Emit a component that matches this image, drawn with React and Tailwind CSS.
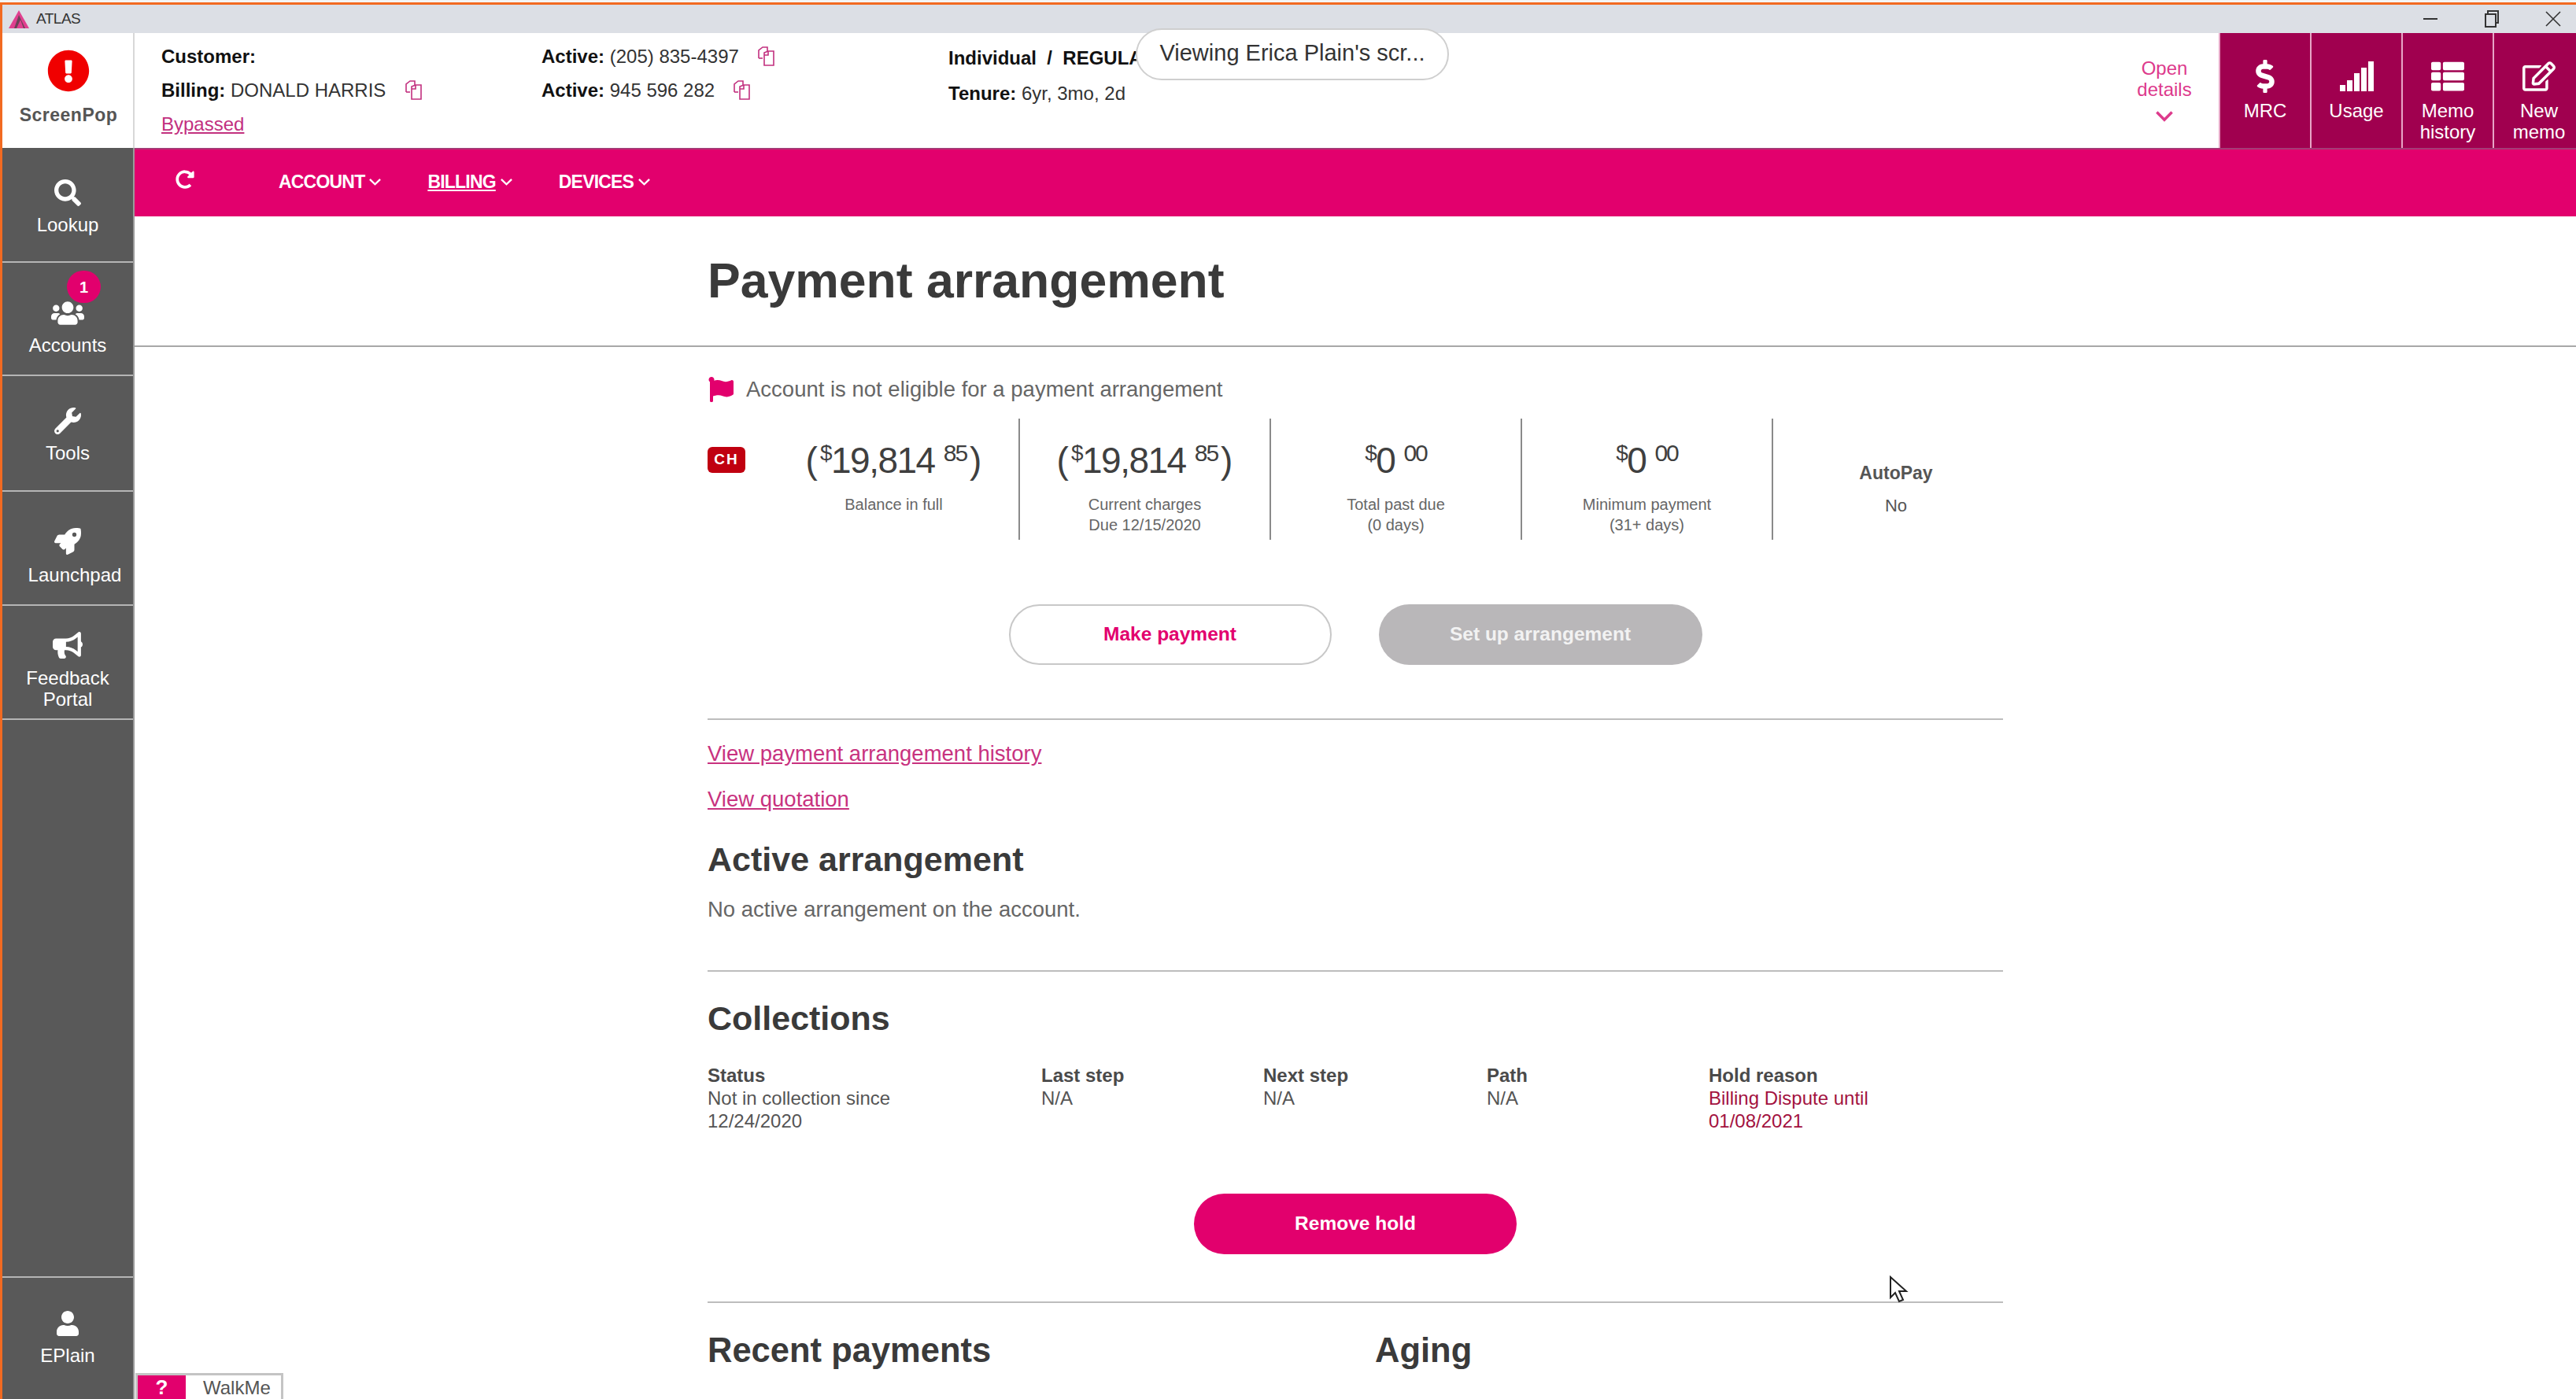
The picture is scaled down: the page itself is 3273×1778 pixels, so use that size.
import { FaSearch, FaUsers, FaWrench, FaRocket, FaBullhorn, FaUser, FaDollarSign, FaThList, FaRegEdit, FaFlag, FaExclamationCircle, FaRedoAlt } from 'react-icons/fa';

const sideItems = [
  { label: ['Lookup'], Icon: FaSearch, box: 'h-[146px] pt-[40px]', gap: 'mt-[10px]', size: 34 },
  { label: ['Accounts'], Icon: FaUsers, box: 'h-[144px] pt-[47px]', gap: 'mt-[10px]', size: 42, badge: '1' },
  { label: ['Tools'], Icon: FaWrench, box: 'h-[147px] pt-[40px]', gap: 'mt-[10px]', size: 34 },
  { label: ['Launchpad'], Icon: FaRocket, box: 'h-[145px] pt-[46px]', gap: 'mt-[12px]', size: 34, shift: 'pl-[18px]' },
  { label: ['Feedback', 'Portal'], Icon: FaBullhorn, box: 'h-[145px] pt-[33px]', gap: 'mt-[11px]', size: 38 },
];

const tiles = [
  { Icon: FaDollarSign, label: ['MRC'] },
  { Icon: null, label: ['Usage'] },
  { Icon: FaThList, label: ['Memo', 'history'] },
  { Icon: FaRegEdit, label: ['New', 'memo'] },
];

const CopyIcon = () => (
  <svg width="24" height="26" viewBox="0 0 24 26" fill="none" stroke="#c2307f" strokeWidth="1.6" className="shrink-0">
    <path d="M3 15V5l5-4h6v5" />
    <path d="M3 15h5" />
    <path d="M10 8l5-2h7v18H10z" fill="white" />
    <path d="M15 6v5h-5" />
  </svg>
);

const SignalIcon = () => (
  <svg width="43" height="38" viewBox="0 0 43 38" fill="white">
    <rect x="0" y="30" width="7" height="8" />
    <rect x="9" y="24" width="7" height="14" />
    <rect x="18" y="15" width="7" height="23" />
    <rect x="27" y="8" width="7" height="30" />
    <rect x="36" y="0" width="7" height="38" />
  </svg>
);

const Chevron = ({ w, h, width = 2.5 }) => (
  <svg width={w} height={h} viewBox="0 0 16 10" fill="none" stroke="currentColor" strokeWidth={width} preserveAspectRatio="none" className="shrink-0">
    <path d="M1 1l7 7 7-7" />
  </svg>
);

const Amount = ({ whole, cents, parens }) => (
  <div className="flex items-start h-[52px] text-[#3f3f3f]">
    {parens && <span className="text-[46px] leading-[52px] mr-[3px]">(</span>}
    <span className="text-[28px] leading-[30px] mt-[2px] tracking-[-1.5px]">$</span>
    <span className="text-[46px] leading-[52px] tracking-[-1.5px]">{whole}</span>
    <span className="text-[30px] leading-[30px] mt-[2px] ml-[11px] tracking-[-2px]">{cents}</span>
    {parens && <span className="text-[46px] leading-[52px] ml-[4px]">)</span>}
  </div>
);

const Stat = ({ whole, cents, parens, lines }) => (
  <div className="w-[319px] h-[154px] shrink-0 border-r-2 border-[#8a8a8a] flex flex-col items-center pt-[27px]">
    <Amount whole={whole} cents={cents} parens={parens} />
    <div className="mt-[17px] text-[20px] leading-[26px] text-[#666] text-center">
      {lines.map(l => <div key={l}>{l}</div>)}
    </div>
  </div>
);

const CollectionCol = ({ title, lines, tone }) => (
  <div className="text-[24px] leading-[29px]">
    <div className="font-bold text-[#4a4a4a]">{title}</div>
    {lines.map(l => <div key={l} className={tone || 'text-[#555]'}>{l}</div>)}
  </div>
);

export default function App() {
  return (
    <div className="relative w-[3273px] h-[1778px] overflow-hidden bg-white font-['Liberation_Sans',Arial,sans-serif]">
      <div className="h-[3px] bg-[#f4f4f4]" />
      <div className="h-[3px] bg-[#f26a21]" />
      <div className="flex flex-col h-[1772px] border-l-[3px] border-[#f26a21]">

        {/* title bar */}
        <div className="h-[36px] shrink-0 bg-[#dcdfe5] flex items-center pl-[8px] pr-[19px]">
          <svg width="26" height="23" viewBox="0 0 26 23" className="shrink-0">
            <path d="M13 0L26 23H0z" fill="#e0408f" />
            <path d="M13 6L7 23h3l5-11 4 11h2z" fill="#444" opacity="0.75" />
          </svg>
          <span className="ml-[9px] text-[19px] text-[#333] tracking-[-0.5px]">ATLAS</span>
          <div className="ml-auto flex items-center gap-[58px] text-[#333]">
            <svg width="20" height="20" viewBox="0 0 20 20" stroke="#333" strokeWidth="2"><path d="M1 10h18" /></svg>
            <svg width="20" height="22" viewBox="0 0 20 22" fill="none" stroke="#333" strokeWidth="2"><path d="M5 4V1h13v15h-3" /><rect x="2" y="5" width="13" height="16" /></svg>
            <svg width="20" height="20" viewBox="0 0 20 20" stroke="#333" strokeWidth="1.6"><path d="M1 1l18 18M19 1L1 19" /></svg>
          </div>
        </div>

        <div className="flex flex-1 min-h-0">
          {/* sidebar */}
          <div className="w-[168px] shrink-0 flex flex-col">
            <div className="h-[146px] shrink-0 bg-white border-r-2 border-[#d8d8d8] flex flex-col items-center pt-[21px] pl-[2px]">
              <FaExclamationCircle className="text-[#f00000] text-[54px]" />
              <div className="mt-[15px] text-[23px] leading-[28px] font-bold text-[#555] tracking-[0.5px]">ScreenPop</div>
            </div>
            <div className="flex-1 bg-[#595959] border-r-2 border-[#9a9a9a] flex flex-col text-white">
              {sideItems.map(({ label, Icon, box, gap, size, badge, shift }) => (
                <div key={label[0]} className={`relative shrink-0 border-b-2 border-[#b5b5b5] flex flex-col items-center ${box}`}>
                  <div className="h-[34px] flex items-center justify-center">
                    <Icon size={size} />
                  </div>
                  <div className={`${gap} text-center text-[24px] leading-[27px] ${shift || ''}`}>
                    {label.map(l => <div key={l}>{l}</div>)}
                  </div>
                  {badge && (
                    <div className="absolute left-[82px] top-[10px] w-[43px] h-[41px] rounded-full bg-[#e2006d] flex items-center justify-center text-[20px] font-bold">
                      {badge}
                    </div>
                  )}
                </div>
              ))}
              <div className="flex-1 border-b-2 border-[#b5b5b5]" />
              <div className="h-[154px] shrink-0 flex flex-col items-center pt-[41px]">
                <div className="h-[34px] flex items-center"><FaUser size={32} /></div>
                <div className="mt-[10px] text-[24px] leading-[27px]">EPlain</div>
              </div>
            </div>
          </div>

          {/* right side */}
          <div className="flex-1 min-w-0 flex flex-col">
            <div className="h-[146px] shrink-0 flex bg-white text-[24px] text-[#333] mr-[-10px]">
              <div className="w-[517px] shrink-0 pl-[34px] pt-[8px] leading-[43px]">
                <div className="font-bold text-[#111]">Customer:</div>
                <div className="flex items-center gap-[23px]"><span><b className="text-[#111]">Billing:</b> DONALD HARRIS</span><CopyIcon /></div>
                <a className="text-[#c2307f] underline">Bypassed</a>
              </div>
              <div className="w-[517px] shrink-0 pt-[8px] leading-[43px]">
                <div className="flex items-center gap-[22px]"><span><b className="text-[#111]">Active:</b> (205) 835-4397</span><CopyIcon /></div>
                <div className="flex items-center gap-[22px]"><span><b className="text-[#111]">Active:</b> 945 596 282</span><CopyIcon /></div>
              </div>
              <div className="pt-[9px] leading-[45px]">
                <div className="font-bold text-[#111]">Individual&nbsp;&nbsp;/&nbsp;&nbsp;REGULAR</div>
                <div><b className="text-[#111]">Tenure:</b> 6yr, 3mo, 2d</div>
              </div>
              <div className="ml-auto w-[138px] flex flex-col items-center pt-[31px] text-[#dd3a8c] leading-[27px]">
                <div>Open</div>
                <div>details</div>
                <div className="mt-[14px]"><Chevron w={22} h={14} /></div>
              </div>
              {tiles.map(({ Icon, label }) => (
                <div key={label[0]} className="w-[116px] shrink-0 bg-[#a0004f] border-l-2 border-[#e7a5c6] first:border-l-0 flex flex-col items-center pt-[33px] text-white">
                  <div className="h-[44px] flex items-center justify-center">
                    {Icon ? <Icon size={42} /> : <SignalIcon />}
                  </div>
                  <div className="mt-[8px] text-center leading-[27px]">
                    {label.map(l => <div key={l}>{l}</div>)}
                  </div>
                </div>
              ))}
            </div>

            {/* nav */}
            <div className="h-[87px] shrink-0 bg-[#e2006d] border-t-2 border-[#a53a76] flex items-center pl-[52px] pb-[2px] text-white font-bold text-[23px] tracking-[-0.8px]">
              <FaRedoAlt size={24} className="mb-[8px]" />
              <div className="ml-[107px] flex items-center gap-[6px]">ACCOUNT<Chevron w={15} h={9} /></div>
              <div className="ml-[59px] flex items-center gap-[6px]"><span className="underline">BILLING</span><Chevron w={15} h={9} /></div>
              <div className="ml-[59px] flex items-center gap-[6px]">DEVICES<Chevron w={15} h={9} /></div>
            </div>

            {/* content */}
            <div className="flex-1 min-h-0 overflow-hidden text-[#333]">
              <div className="h-[166px] border-b-2 border-[#a8a8a8]">
                <div className="w-[1646px] mx-auto h-full flex items-center">
                  <h1 className="text-[62.5px] font-bold text-[#3a3a3a]">Payment arrangement</h1>
                </div>
              </div>

              <div className="w-[1646px] mx-auto">
                <div className="mt-[34px] h-[40px] flex items-center text-[27.5px] text-[#666]">
                  <FaFlag className="text-[#e2006d] ml-[1px]" size={32} />
                  <span className="ml-[16px]">Account is not eligible for a payment arrangement</span>
                </div>

                <div className="mt-[17px] flex items-start">
                  <div className="w-[78px] shrink-0 pt-[36px]">
                    <div className="w-[48px] h-[33px] rounded-[6px] bg-[#c00010] text-white text-[19px] font-bold flex items-center justify-center tracking-[2px]">CH</div>
                  </div>
                  <Stat whole="19,814" cents="85" parens lines={['Balance in full']} />
                  <Stat whole="19,814" cents="85" parens lines={['Current charges', 'Due 12/15/2020']} />
                  <Stat whole="0" cents="00" lines={['Total past due', '(0 days)']} />
                  <Stat whole="0" cents="00" lines={['Minimum payment', '(31+ days)']} />
                  <div className="w-[312px] shrink-0 flex flex-col items-center pt-[54px] text-[#555]">
                    <div className="text-[23px] leading-[30px] font-bold">AutoPay</div>
                    <div className="mt-[12px] text-[22px] leading-[30px]">No</div>
                  </div>
                </div>

                <div className="mt-[82px] flex justify-center gap-[60px] text-[24.5px] font-bold">
                  <button className="w-[410px] h-[77px] rounded-full border-2 border-[#c8c8c8] bg-white text-[#e2006d]">Make payment</button>
                  <button className="w-[411px] h-[77px] rounded-full bg-[#b9b7b9] text-[#f2f2f2]">Set up arrangement</button>
                </div>

                <div className="mt-[68px] h-[2px] bg-[#bdbdbd]" />
                <a className="block mt-[23px] text-[27.5px] leading-[40px] text-[#c8327f] underline">View payment arrangement history</a>
                <a className="block mt-[18px] text-[27.5px] leading-[40px] text-[#c8327f] underline">View quotation</a>

                <h2 className="mt-[26px] text-[43px] leading-[60px] font-bold text-[#3a3a3a]">Active arrangement</h2>
                <p className="mt-[14px] text-[27.5px] leading-[40px] text-[#666]">No active arrangement on the account.</p>

                <div className="mt-[57px] h-[2px] bg-[#bdbdbd]" />
                <h2 className="mt-[29px] text-[43px] leading-[60px] font-bold text-[#3a3a3a]">Collections</h2>

                <div className="mt-[28px] grid grid-cols-[424px_282px_284px_282px_1fr]">
                  <CollectionCol title="Status" lines={['Not in collection since', '12/24/2020']} />
                  <CollectionCol title="Last step" lines={['N/A']} />
                  <CollectionCol title="Next step" lines={['N/A']} />
                  <CollectionCol title="Path" lines={['N/A']} />
                  <CollectionCol title="Hold reason" lines={['Billing Dispute until', '01/08/2021']} tone="text-[#a3123f]" />
                </div>

                <div className="mt-[78px] flex justify-center">
                  <button className="w-[410px] h-[77px] rounded-full bg-[#e2006d] text-white text-[24.5px] font-bold">Remove hold</button>
                </div>

                <div className="mt-[60px] h-[2px] bg-[#bdbdbd]" />
                <div className="mt-[30px] flex text-[43.5px] leading-[60px] font-bold text-[#3a3a3a]">
                  <h2 className="w-[848px]">Recent payments</h2>
                  <h2>Aging</h2>
                </div>
              </div>
            </div>
          </div>
        </div>
      </div>

      {/* screen share pill */}
      <div className="absolute left-[1443px] top-[36px] w-[398px] h-[66px] rounded-full bg-white border-2 border-[#cfcfcf] flex items-center justify-center pb-[3px] text-[29px] text-[#333] whitespace-nowrap">
        Viewing Erica Plain's scr...
      </div>

      {/* WalkMe tab */}
      <div className="absolute left-[172px] top-[1745px] w-[188px] h-[40px] border-[3px] border-[#c4c4c4] bg-white flex">
        <div className="w-[61px] bg-[#e2006d] text-white text-[26px] font-bold flex justify-center leading-[30px]">?</div>
        <div className="ml-[22px] text-[24px] leading-[32px] text-[#555]">WalkMe</div>
      </div>

      {/* mouse pointer */}
      <svg className="absolute left-[2400px] top-[1621px]" width="26" height="36" viewBox="0 0 26 36" fill="white" stroke="#222" strokeWidth="2">
        <path d="M2 2v26l6-6 5 11 5-2-5-11h9z" />
      </svg>
    </div>
  );
}
